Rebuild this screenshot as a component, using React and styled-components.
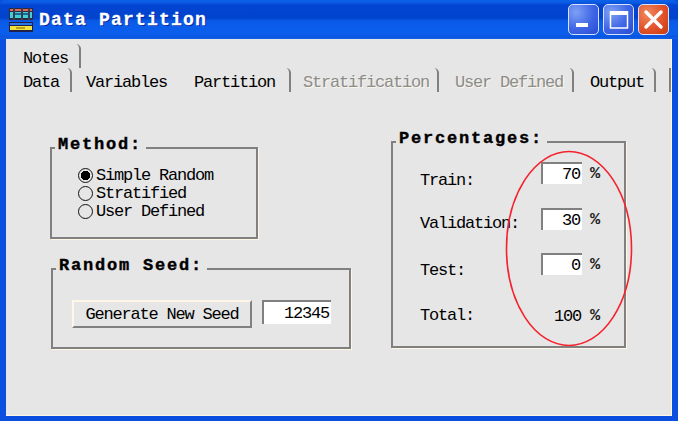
import React from "react";
import styled, { createGlobalStyle } from "styled-components";

const GlobalStyle = createGlobalStyle`
  html, body {
    margin: 0;
    padding: 0;
    background: #0a50dc;
  }
  body {
    width: 678px;
    height: 421px;
    overflow: hidden;
    font-family: "Liberation Mono", "DejaVu Sans Mono", monospace;
  }
`;

const Window = styled.div`
  width: 678px;
  height: 421px;
  display: flex;
  flex-direction: column;
  background: #0a4fe0;
  overflow: hidden;
`;

const TitleBar = styled.div`
  height: 39px;
  flex: none;
  display: flex;
  align-items: center;
  padding: 0 9px;
  box-sizing: border-box;
  border-radius: 6px 6px 0 0;
  background: linear-gradient(180deg, #0b62e8 0, #0a58e0 3px, #0345d2 5px, #0043cc 18px, #0a5ae8 21px, #0b5fec 33px, #0a55e0 37px, #1261e8 39px);
`;

const TitleText = styled.span`
  margin-left: 6px;
  padding-top: 1px;
  color: #fff;
  font-size: 18px;
  font-weight: 700;
  letter-spacing: 1.2px;
  -webkit-text-stroke: 0.3px #fff;
  text-shadow: 1px 1px 0 #02209a;
`;

const WinButtons = styled.div`
  margin-left: auto;
  display: flex;
  gap: 4px;
`;

const WinButton = styled.div`
  width: 31px;
  height: 31px;
  box-sizing: border-box;
  border: 1.5px solid #d8e2fa;
  border-radius: 5px;
  display: flex;
  align-items: center;
  justify-content: center;
  background: ${(p) =>
    p.$close
      ? "radial-gradient(circle at 30% 30%, #f08a60, #e2522a 55%, #c43a14)"
      : "radial-gradient(circle at 25% 25%, #7da0f4, #3f66e6 55%, #2a4bcf)"};
`;

const Body = styled.div`
  position: relative;
  flex: 1;
  margin: 0 6px 5px;
  background: #e6e6e6;
  box-shadow: inset -1px -1px 0 #fff6e6;
  display: flex;
  flex-direction: column;
`;

const TabRow = styled.div`
  display: flex;
  height: ${(p) => p.$h}px;
  padding-left: 17px;
  margin-top: ${(p) => p.$mt || 0}px;
`;

const Tab = styled.div`
  width: ${(p) => p.$w}px;
  box-sizing: border-box;
  padding-left: ${(p) => p.$pl || 0}px;
  padding-top: 6px;
  font-size: 17px;
  letter-spacing: -1.2px;
  line-height: 17px;
  white-space: pre;
  color: ${(p) => (p.$off ? "#8c8c8c" : "#000")};
  text-shadow: ${(p) => (p.$off ? "1px 1px 0 #fbf6ea" : "none")};
  border-right: ${(p) => (p.$open ? "none" : "2px solid #808080")};
  border-top-right-radius: 5px;
`;

const TabEdge = styled.div`
  margin-left: auto;
  margin-right: 1px;
  width: 2px;
  background: #808080;
`;

const Panel = styled.div`
  display: flex;
  padding: 38px 0 0 44px;
  gap: 40px;
`;

const LeftColumn = styled.div`
  width: 301px;
  display: flex;
  flex-direction: column;
  gap: 18px;
  margin-top: 6px;
`;

const Group = styled.fieldset`
  margin: 0;
  margin-left: ${(p) => p.$ml || 0}px;
  width: ${(p) => p.$w}px;
  height: ${(p) => p.$h}px;
  box-sizing: border-box;
  padding: 0;
  border: 2px solid #808080;
  box-shadow: 1px 1px 0 #fff6e6;
`;

const Legend = styled.legend`
  margin-left: 3px;
  padding: 0 4px 6px 3px;
  font-size: 17px;
  line-height: 18px;
  font-weight: 700;
  letter-spacing: 1.8px;
  -webkit-text-stroke: 0.4px #000;
  color: #000;
  background: #e6e6e6;
`;

const RadioList = styled.div`
  display: flex;
  flex-direction: column;
  padding: 6px 0 0 26px;
`;

const RadioRow = styled.div`
  height: 18px;
  display: flex;
  align-items: center;
  gap: 3px;
  font-size: 17px;
  letter-spacing: -1.2px;
  color: #000;
`;

const Radio = styled.span`
  width: 15px;
  height: 15px;
  box-sizing: border-box;
  border-radius: 50%;
  border: 1.5px solid #111;
  background: ${(p) => (p.$on ? "radial-gradient(circle, #000 0 4.5px, #e6e6e6 5px)" : "#e6e6e6")};
`;

const SeedRow = styled.div`
  display: flex;
  align-items: flex-start;
  gap: 10px;
  padding: 19px 0 0 19px;
`;

const SeedButton = styled.button`
  width: 180px;
  height: 28px;
  box-sizing: border-box;
  padding: 0;
  font-family: inherit;
  font-size: 17px;
  letter-spacing: -1.2px;
  color: #000;
  background: #e6e6e6;
  border: 2px solid;
  border-color: #fff6e6 #808080 #808080 #fff6e6;
`;

const Field = styled.div`
  width: ${(p) => p.$w}px;
  height: ${(p) => p.$h}px;
  box-sizing: border-box;
  padding-right: 2px;
  background: #fff;
  border-top: 2px solid #808080;
  border-left: 2px solid #808080;
  font-size: 17px;
  letter-spacing: -1.2px;
  line-height: ${(p) => p.$h - 1}px;
  text-align: right;
  color: #000;
`;

const PercentRow = styled.div`
  display: grid;
  grid-template-columns: 121px 41px 1fr;
  height: ${(p) => p.$h}px;
  padding-left: 27px;
  font-size: 17px;
  letter-spacing: -1.2px;
  color: #000;
`;

const RowLabel = styled.span`
  padding-top: ${(p) => p.$drop}px;
`;

const TotalValue = styled.span`
  padding: 9px 1px 0 0;
  text-align: right;
`;

const Percent = styled.span`
  padding: ${(p) => p.$top || 2}px 0 0 8px;
  font-weight: 700;
  font-size: 17px;
  letter-spacing: 0;
  color: #222;
`;

const PercentRows = styled.div`
  padding-top: 8px;
`;

const RedOval = styled.svg`
  position: absolute;
  left: 498px;
  top: 110px;
  pointer-events: none;
`;

function AppIcon() {
  return (
    <svg width="24" height="24" viewBox="0 0 24 24" shapeRendering="crispEdges">
      <rect x="0" y="0" width="24" height="12" fill="#2a2a40" />
      <rect x="1" y="1" width="22" height="2" fill="#e06a50" />
      <rect x="1" y="4" width="22" height="6" fill="#3fd0d8" />
      <rect x="5" y="5" width="14" height="2" fill="#1a6a9a" />
      <rect x="4" y="0" width="2" height="12" fill="#3a3a50" />
      <rect x="12" y="0" width="2" height="12" fill="#3a3a50" />
      <rect x="19" y="0" width="2" height="12" fill="#3a3a50" />
      <rect x="0" y="14" width="24" height="10" fill="#20204a" />
      <rect x="1" y="15" width="22" height="2" fill="#2a78e8" />
      <rect x="1" y="18" width="22" height="4" fill="#f2e23a" />
      <rect x="7" y="19" width="9" height="2" fill="#b8a020" />
    </svg>
  );
}

export default function App() {
  return (
    <Window>
      <GlobalStyle />
      <TitleBar>
        <AppIcon />
        <TitleText>Data Partition</TitleText>
        <WinButtons>
          <WinButton>
            <svg width="27" height="27" viewBox="0 0 27 27">
              <rect x="6" y="17" width="12" height="4" fill="#fff" />
            </svg>
          </WinButton>
          <WinButton>
            <svg width="27" height="27" viewBox="0 0 27 27">
              <rect x="5.5" y="6" width="17" height="16" fill="none" stroke="#fff" strokeWidth="1.5" />
              <rect x="5" y="5" width="18" height="4" fill="#fff" />
            </svg>
          </WinButton>
          <WinButton $close>
            <svg width="27" height="27" viewBox="0 0 27 27">
              <path d="M6 6 L21 21 M21 6 L6 21" stroke="#fff" strokeWidth="3.4" strokeLinecap="round" />
            </svg>
          </WinButton>
        </WinButtons>
      </TitleBar>
      <Body>
        <TabRow $h={24} $mt={5}>
          <Tab $w={58}>Notes</Tab>
        </TabRow>
        <TabRow $h={24}>
          <Tab $w={49}>Data</Tab>
          <Tab $w={108} $pl={14} $open>Variables</Tab>
          <Tab $w={111} $pl={14}>Partition</Tab>
          <Tab $w={148} $pl={12} $off>Stratification</Tab>
          <Tab $w={135} $pl={16} $off>User Defined</Tab>
          <Tab $w={82} $pl={16}>Output</Tab>
          <TabEdge />
        </TabRow>
        <Panel>
          <LeftColumn>
            <Group $w={208} $h={103}>
              <Legend>Method:</Legend>
              <RadioList>
                <RadioRow><Radio $on />Simple Random</RadioRow>
                <RadioRow><Radio />Stratified</RadioRow>
                <RadioRow><Radio />User Defined</RadioRow>
              </RadioList>
            </Group>
            <Group $w={300} $h={92} $ml={1}>
              <Legend>Random Seed:</Legend>
              <SeedRow>
                <SeedButton>Generate New Seed</SeedButton>
                <Field $w={69} $h={24}>12345</Field>
              </SeedRow>
            </Group>
          </LeftColumn>
          <Group $w={235} $h={218}>
            <Legend>Percentages:</Legend>
            <PercentRows>
              <PercentRow $h={46}>
                <RowLabel $drop={9}>Train:</RowLabel>
                <Field $w={41} $h={22}>70</Field>
                <Percent>%</Percent>
              </PercentRow>
              <PercentRow $h={45}>
                <RowLabel $drop={6}>Validation:</RowLabel>
                <Field $w={41} $h={22}>30</Field>
                <Percent>%</Percent>
              </PercentRow>
              <PercentRow $h={45}>
                <RowLabel $drop={8}>Test:</RowLabel>
                <Field $w={41} $h={22}>0</Field>
                <Percent>%</Percent>
              </PercentRow>
              <PercentRow $h={30}>
                <RowLabel $drop={8}>Total:</RowLabel>
                <TotalValue>100</TotalValue>
                <Percent $top={8}>%</Percent>
              </PercentRow>
            </PercentRows>
          </Group>
        </Panel>
        <RedOval width="132" height="200" viewBox="0 0 132 200">
          <ellipse cx="65" cy="99.5" rx="62.5" ry="97" fill="none" stroke="#f5222d" strokeWidth="1.6" />
        </RedOval>
      </Body>
    </Window>
  );
}
